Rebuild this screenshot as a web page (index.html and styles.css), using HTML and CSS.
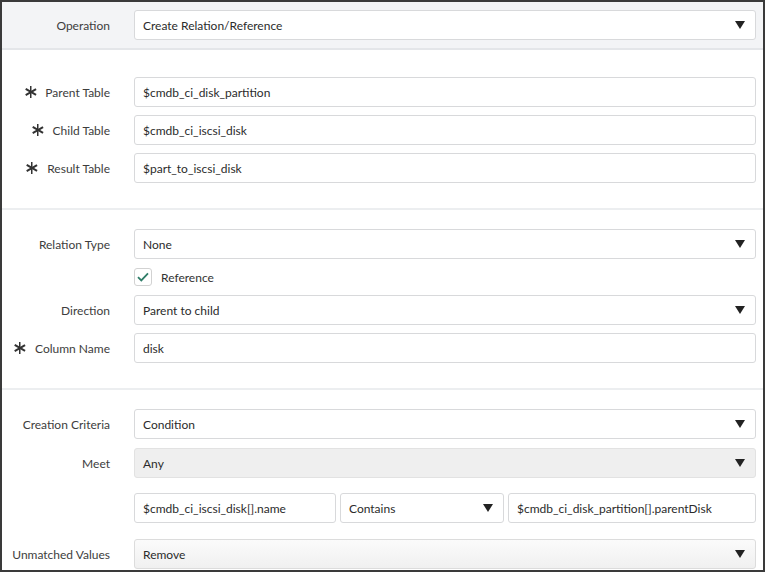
FILE: index.html
```html
<!DOCTYPE html>
<html>
	<head>
		<title>Relation Operation</title>
		<link rel="stylesheet" href="styles.css">
	</head>
	<body>
		<div class="form">
			<div class="section top">
				<div class="row">
					<label class="label">Operation</label>
					<div class="field select">Create Relation/Reference<span class="arrow"></span></div>
				</div>
			</div>

			<div class="section tables">
				<div class="row">
					<label class="label"><span class="req"></span>Parent Table</label>
					<div class="field">$cmdb_ci_disk_partition</div>
				</div>
				<div class="row">
					<label class="label"><span class="req"></span>Child Table</label>
					<div class="field">$cmdb_ci_iscsi_disk</div>
				</div>
				<div class="row">
					<label class="label"><span class="req"></span>Result Table</label>
					<div class="field">$part_to_iscsi_disk</div>
				</div>
			</div>

			<div class="section relation">
				<div class="row">
					<label class="label">Relation Type</label>
					<div class="field select">None<span class="arrow"></span></div>
				</div>
				<div class="row check-row">
					<span class="label"></span>
					<span class="checkbox">
						<svg width="12" height="10" viewBox="0 0 12 10"><path d="M1 5.2 L4.3 8.4 L11 1.4" fill="none" stroke="#2f7d68" stroke-width="1.8"/></svg>
					</span>
					<span class="check-text">Reference</span>
				</div>
				<div class="row">
					<label class="label">Direction</label>
					<div class="field select">Parent to child<span class="arrow"></span></div>
				</div>
				<div class="row">
					<label class="label"><span class="req"></span>Column Name</label>
					<div class="field">disk</div>
				</div>
			</div>

			<div class="section criteria">
				<div class="row">
					<label class="label">Creation Criteria</label>
					<div class="field select">Condition<span class="arrow"></span></div>
				</div>
				<div class="row meet">
					<label class="label">Meet</label>
					<div class="field select disabled">Any<span class="arrow"></span></div>
				</div>
				<div class="row cond">
					<span class="label"></span>
					<div class="cond-grid">
						<div class="field">$cmdb_ci_iscsi_disk[].name</div>
						<div class="field select">Contains<span class="arrow"></span></div>
						<div class="field">$cmdb_ci_disk_partition[].parentDisk</div>
					</div>
				</div>
				<div class="row unmatched">
					<label class="label">Unmatched Values</label>
					<div class="field select shaded">Remove<span class="arrow"></span></div>
				</div>
			</div>
		</div>
	</body>
</html>
```

FILE: styles.css
```css
* {
	margin: 0; padding: 0;
	box-sizing: border-box;
}

body {
	font-family: "Lato", "Liberation Sans", sans-serif;
	font-size: 12px;
	color: #333;
	background: #fff;
}

.form {
	width: 765px;
	height: 572px;
	border: 2px solid #3a3a3a;
	overflow: hidden;
}

.section {
	display: flex;
	flex-direction: column;
	border-bottom: 2px solid #eceef0;
}

.top {
	background: #f3f4f6;
	padding: 8px 0 8px;
	border-bottom-color: #e4e6e9;
}

.tables {
	padding: 27px 0 25px;
	gap: 8px;
}

.relation {
	padding: 19px 0 25px;
	gap: 8px;
}

.criteria {
	padding: 19px 0 0;
	border-bottom: none;
}

.row {
	display: flex;
	align-items: center;
	padding-right: 7px;
}

.label {
	width: 108px;
	flex: none;
	margin-right: 24px;
	text-align: right;
	color: #3d3d3d;
	display: flex;
	justify-content: flex-end;
	align-items: center;
}

.req {
	width: 12px;
	height: 12px;
	margin-right: 9px;
	background:
		linear-gradient(#333, #333) center / 1.5px 12px no-repeat;
	position: relative;
}

.req::before, .req::after {
	content: "";
	position: absolute;
	left: 5.25px;
	top: 0;
	width: 1.5px;
	height: 12px;
	background: #333;
	transform: rotate(60deg);
}

.req::after {
	transform: rotate(-60deg);
}

.field {
	flex: 1;
	height: 30px;
	border: 1px solid #d8d9db;
	border-radius: 3px;
	background: #fff;
	padding: 0 8px;
	display: flex;
	align-items: center;
	color: #2b2b2b;
	white-space: nowrap;
}

.select {
	justify-content: space-between;
}

.arrow {
	width: 0;
	height: 0;
	border-left: 5px solid transparent;
	border-right: 5px solid transparent;
	border-top: 8px solid #222;
	margin-right: 2px;
}

.disabled {
	background: #efefef;
	border-color: #e2e2e2;
}

.shaded {
	background: linear-gradient(#fbfbfb, #f0f0f0);
	border-color: #dcdcdc;
}

.check-row {
	height: 18px;
	margin: 1px 0;
}

.checkbox {
	width: 18px;
	height: 18px;
	border: 1px solid #d2d2d2;
	border-radius: 3px;
	display: flex;
	align-items: center;
	justify-content: center;
	margin-right: 9px;
}

.check-text {
	color: #333;
}

.meet {
	margin-top: 9px;
}

.cond {
	margin-top: 15px;
}

.unmatched {
	margin-top: 16px;
}

.cond-grid {
	flex: 1;
	display: grid;
	grid-template-columns: 202px 164px 1fr;
	column-gap: 4px;
}
```
